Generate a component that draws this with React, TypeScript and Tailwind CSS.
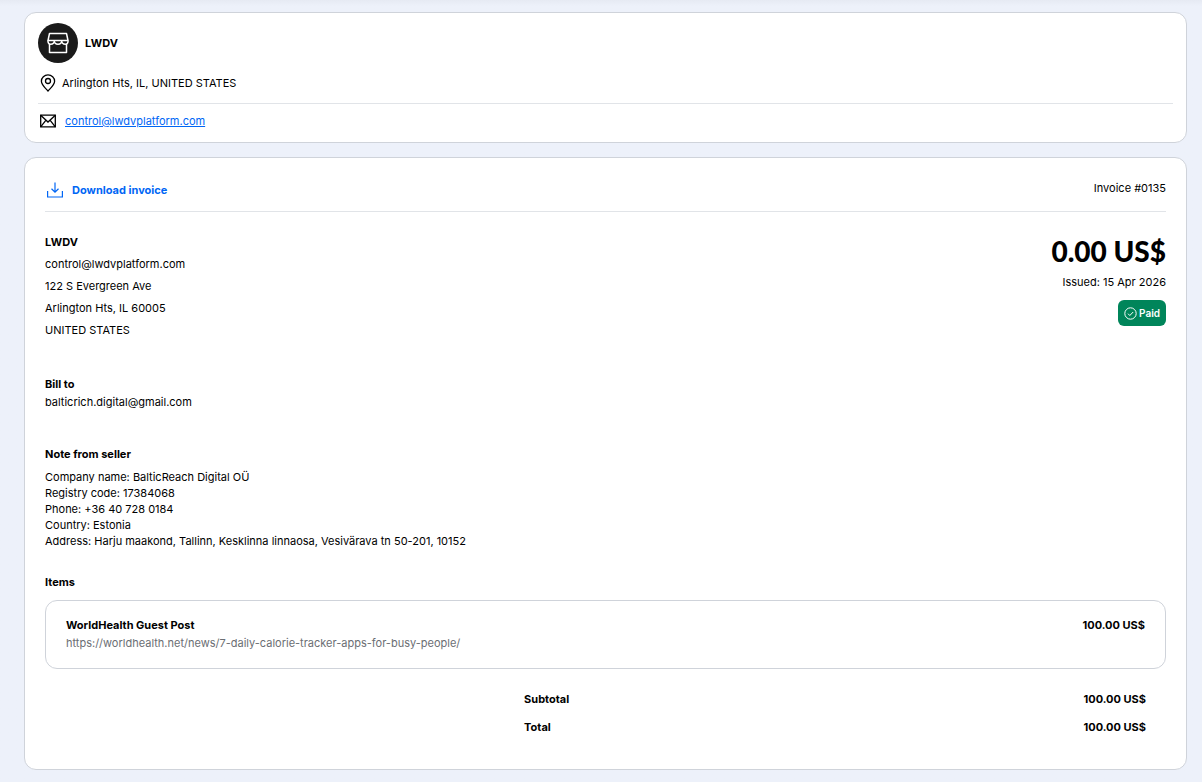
const addressLines = [
  "control@lwdvplatform.com",
  "122 S Evergreen Ave",
  "Arlington Hts, IL 60005",
  "UNITED STATES",
];

const noteLines = [
  "Company name: BalticReach Digital OÜ",
  "Registry code: 17384068",
  "Phone: +36 40 728 0184",
  "Country: Estonia",
  "Address: Harju maakond, Tallinn, Kesklinna linnaosa, Vesivärava tn 50-201, 10152",
];

const totals = [
  { label: "Subtotal", value: "100.00 US$" },
  { label: "Total", value: "100.00 US$" },
];

function StoreIcon() {
  return (
    <svg width="22" height="22" viewBox="0 0 22 22" fill="none" stroke="white" strokeWidth="1.5" strokeLinejoin="round">
      <path d="M2.500 1.500h17L21 8.500H1z" />
      <path d="M1 8.500v1.300a2.600 2.600 0 0 0 2.600 2.400c2.200 0 3.700-1.300 3.700-3.400 0 2.100 1.500 3.400 3.700 3.400s3.700-1.300 3.700-3.400c0 2.100 1.500 3.400 3.700 3.400A2.600 2.600 0 0 0 21 9.800V8.500" />
      <path d="M2.500 12v8.500h17V12" />
    </svg>
  );
}

function PinIcon() {
  return (
    <svg width="16" height="18" viewBox="0 0 16 18" fill="none" stroke="black" strokeWidth="1.3">
      <path d="M8 17C5.600 14.400 1.400 10.800 1.400 7.200a6.600 6.400 0 0 1 13.200 0C14.600 10.800 10.400 14.400 8 17z" />
      <circle cx="8" cy="7" r="2.500" />
    </svg>
  );
}

function MailIcon() {
  return (
    <svg width="16" height="14" viewBox="0 0 16 14" fill="none" stroke="black" strokeWidth="1.3">
      <path d="M.7 1.200h14.600v11.600H.7z" />
      <path d="M.7 1.200L8 8l7.300-6.800M.7 12.800l5.300-6.600M15.300 12.800L10 6.200" />
    </svg>
  );
}

function DownloadIcon() {
  return (
    <svg width="16" height="16" viewBox="0 0 16 16" fill="none" stroke="currentColor" strokeWidth="1.2">
      <path d="M8 .5v9.500M4.500 6.800L8 10.200l3.500-3.400" />
      <path d="M.6 9v6h14.800V9" />
    </svg>
  );
}

function CheckIcon() {
  return (
    <svg width="13" height="13" viewBox="0 0 13 13" fill="none" stroke="currentColor" strokeWidth="1">
      <circle cx="6.500" cy="6.500" r="5.700" />
      <path d="M4 6.700l1.800 1.800L9.200 5" />
    </svg>
  );
}

function SellerCard() {
  return (
    <section className="rounded-xl border border-[#cfd3da] bg-white px-[13px] pt-[10px] pb-1">
      <div className="flex items-center gap-[7px]">
        <div className="flex size-10 items-center justify-center rounded-full bg-[#1a1a1a]">
          <StoreIcon />
        </div>
        <h1 className="font-bold">LWDV</h1>
      </div>
      <div className="flex h-[41px] items-center gap-[6px] border-b border-[#e1e4e8] pl-[2px]">
        <PinIcon />
        <span>Arlington Hts, IL, UNITED STATES</span>
      </div>
      <div className="flex h-[34px] items-center gap-[9px] pl-[2px]">
        <MailIcon />
        <a href="mailto:control@lwdvplatform.com" className="text-[#0066f5] underline">
          control@lwdvplatform.com
        </a>
      </div>
    </section>
  );
}

function InvoiceCard() {
  return (
    <section className="mt-[14px] rounded-xl border border-[#cfd3da] bg-white px-5 pt-5 pb-7">
      <div className="flex items-start justify-between border-b border-[#e1e4e8] pb-[9px]">
        <button type="button" className="flex h-6 items-center gap-[9px] pl-[2px] font-bold text-[#0066f5]">
          <DownloadIcon />
          Download invoice
        </button>
        <span className="leading-5">Invoice #0135</span>
      </div>

      <div className="mt-[19px] flex justify-between">
        <address className="leading-[22px] not-italic">
          <p className="font-bold">LWDV</p>
          {addressLines.map((line) => (
            <p key={line}>{line}</p>
          ))}
        </address>
        <div className="flex flex-col items-end">
          <p className="font-[Lato,sans-serif] text-[28px] leading-10 font-black">0.00 US$</p>
          <p className="leading-[22px]">Issued: 15 Apr 2026</p>
          <span className="mt-[7px] flex h-[26px] items-center gap-[2px] rounded-md bg-[#00855a] px-[6px] text-[10px] font-semibold text-white">
            <CheckIcon />
            Paid
          </span>
        </div>
      </div>

      <div className="mt-[34px]">
        <h2 className="font-bold">Bill to</h2>
        <p>balticrich.digital@gmail.com</p>
      </div>

      <div className="mt-[34px]">
        <h2 className="font-bold">Note from seller</h2>
        <div className="mt-[6px] leading-4">
          {noteLines.map((line) => (
            <p key={line}>{line}</p>
          ))}
        </div>
      </div>

      <h2 className="mt-6 font-bold">Items</h2>
      <div className="mt-[9px] flex justify-between rounded-xl border border-[#cfd3da] px-5 pt-[15px] pb-4">
        <div>
          <h3 className="font-bold">WorldHealth Guest Post</h3>
          <p className="text-[#6b6e73]">
            https://worldhealth.net/news/7-daily-calorie-tracker-apps-for-busy-people/
          </p>
        </div>
        <p className="font-bold">100.00 US$</p>
      </div>

      <div className="mt-4 ml-auto w-7/12 pr-5 pl-3">
        <table className="w-full font-bold">
          <tbody>
            {totals.map((row) => (
              <tr key={row.label} className="h-7">
                <th scope="row" className="text-left">{row.label}</th>
                <td className="text-right">{row.value}</td>
              </tr>
            ))}
          </tbody>
        </table>
      </div>
    </section>
  );
}

export default function App() {
  return (
    <main className="min-h-screen bg-[#edf1fa] bg-linear-to-b from-[#e6eaf3] to-[#edf1fa] to-[6px] pt-3 pr-[15px] pb-3 pl-6 font-[Inter,sans-serif] text-[11px] leading-[18px] text-black">
      <SellerCard />
      <InvoiceCard />
    </main>
  );
}
